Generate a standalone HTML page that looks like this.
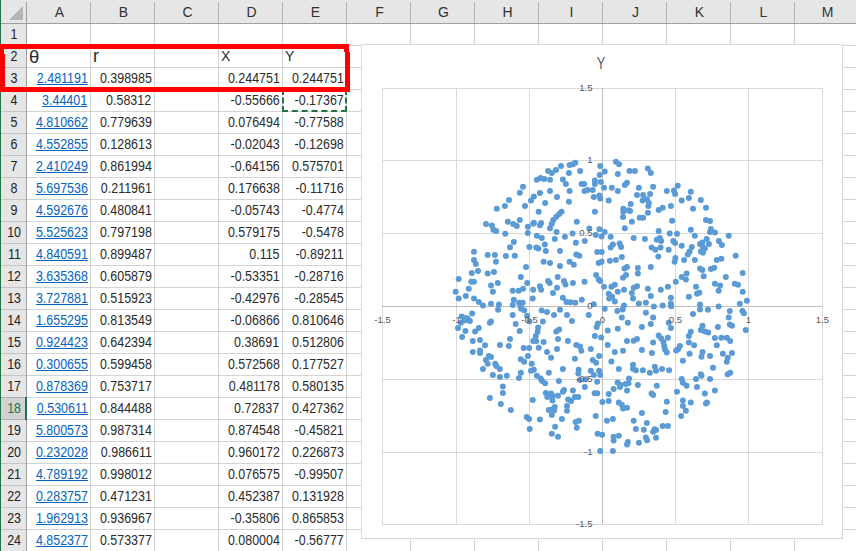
<!DOCTYPE html><html><head><meta charset="utf-8"><style>

*{margin:0;padding:0;box-sizing:border-box}
html,body{width:856px;height:551px;overflow:hidden;background:#fff}
body{position:relative;font-family:"Liberation Sans",sans-serif}
.a{position:absolute}
.hl{position:absolute;height:1px;background:#d4d4d4}
.vl{position:absolute;width:1px;background:#d4d4d4}
.ch{position:absolute;top:0;height:23px;text-align:center;font-size:14px;line-height:24px;color:#333}
.rh{position:absolute;left:2px;width:25px;text-align:center;font-size:14.5px;color:#222}
.c{position:absolute;height:21px;line-height:21px;font-size:14px;color:#2a2a2a;white-space:nowrap}
.c span{display:inline-block;transform:translateX(-0.5px) scaleX(0.89);transform-origin:100% 50%}
.rh span{display:inline-block;transform:scaleX(0.86);transform-origin:50% 50%}
.r{text-align:right}
.lk{color:#0563c1}
.lk span{text-decoration:underline}

</style></head><body>
<div class="a" style="left:0;top:0;width:856px;height:23px;background:#e6e6e6"></div>
<div class="a" style="left:0;top:23px;width:856px;height:1px;background:#9f9f9f"></div>
<div class="a" style="left:0;top:24px;width:26px;height:527px;background:#e6e6e6"></div>
<div class="a" style="left:26px;top:2px;width:1px;height:549px;background:#9f9f9f"></div>
<svg class="a" style="left:0;top:0" width="26" height="23"><polygon points="9,20 23,6 23,20" fill="#b4b4b4"/></svg>
<div class="ch" style="left:28px;width:63px">A</div>
<div class="ch" style="left:92px;width:63px">B</div>
<div class="ch" style="left:156px;width:63px">C</div>
<div class="ch" style="left:220px;width:63px">D</div>
<div class="ch" style="left:284px;width:63px">E</div>
<div class="ch" style="left:348px;width:63px">F</div>
<div class="ch" style="left:412px;width:63px">G</div>
<div class="ch" style="left:476px;width:63px">H</div>
<div class="ch" style="left:540px;width:63px">I</div>
<div class="ch" style="left:604px;width:63px">J</div>
<div class="ch" style="left:668px;width:63px">K</div>
<div class="ch" style="left:732px;width:63px">L</div>
<div class="ch" style="left:796px;width:63px">M</div>
<div class="a" style="left:90px;top:2px;width:1px;height:21px;background:#b5b5b5"></div>
<div class="a" style="left:154px;top:2px;width:1px;height:21px;background:#b5b5b5"></div>
<div class="a" style="left:218px;top:2px;width:1px;height:21px;background:#b5b5b5"></div>
<div class="a" style="left:282px;top:2px;width:1px;height:21px;background:#b5b5b5"></div>
<div class="a" style="left:346px;top:2px;width:1px;height:21px;background:#b5b5b5"></div>
<div class="a" style="left:410px;top:2px;width:1px;height:21px;background:#b5b5b5"></div>
<div class="a" style="left:474px;top:2px;width:1px;height:21px;background:#b5b5b5"></div>
<div class="a" style="left:538px;top:2px;width:1px;height:21px;background:#b5b5b5"></div>
<div class="a" style="left:602px;top:2px;width:1px;height:21px;background:#b5b5b5"></div>
<div class="a" style="left:666px;top:2px;width:1px;height:21px;background:#b5b5b5"></div>
<div class="a" style="left:730px;top:2px;width:1px;height:21px;background:#b5b5b5"></div>
<div class="a" style="left:794px;top:2px;width:1px;height:21px;background:#b5b5b5"></div>
<div class="a" style="left:858px;top:2px;width:1px;height:21px;background:#b5b5b5"></div>
<div class="vl" style="left:90px;top:24px;height:527px"></div>
<div class="vl" style="left:154px;top:24px;height:527px"></div>
<div class="vl" style="left:218px;top:24px;height:527px"></div>
<div class="vl" style="left:282px;top:24px;height:527px"></div>
<div class="vl" style="left:346px;top:24px;height:527px"></div>
<div class="vl" style="left:410px;top:24px;height:527px"></div>
<div class="vl" style="left:474px;top:24px;height:527px"></div>
<div class="vl" style="left:538px;top:24px;height:527px"></div>
<div class="vl" style="left:602px;top:24px;height:527px"></div>
<div class="vl" style="left:666px;top:24px;height:527px"></div>
<div class="vl" style="left:730px;top:24px;height:527px"></div>
<div class="vl" style="left:794px;top:24px;height:527px"></div>
<div class="vl" style="left:858px;top:24px;height:527px"></div>
<div class="hl" style="left:27px;top:45px;width:829px"></div>
<div class="a" style="left:1px;top:45px;width:25px;height:1px;background:#c4c4c4"></div>
<div class="hl" style="left:27px;top:67px;width:829px"></div>
<div class="a" style="left:1px;top:67px;width:25px;height:1px;background:#c4c4c4"></div>
<div class="hl" style="left:27px;top:89px;width:829px"></div>
<div class="a" style="left:1px;top:89px;width:25px;height:1px;background:#c4c4c4"></div>
<div class="hl" style="left:27px;top:111px;width:829px"></div>
<div class="a" style="left:1px;top:111px;width:25px;height:1px;background:#c4c4c4"></div>
<div class="hl" style="left:27px;top:133px;width:829px"></div>
<div class="a" style="left:1px;top:133px;width:25px;height:1px;background:#c4c4c4"></div>
<div class="hl" style="left:27px;top:155px;width:829px"></div>
<div class="a" style="left:1px;top:155px;width:25px;height:1px;background:#c4c4c4"></div>
<div class="hl" style="left:27px;top:177px;width:829px"></div>
<div class="a" style="left:1px;top:177px;width:25px;height:1px;background:#c4c4c4"></div>
<div class="hl" style="left:27px;top:199px;width:829px"></div>
<div class="a" style="left:1px;top:199px;width:25px;height:1px;background:#c4c4c4"></div>
<div class="hl" style="left:27px;top:221px;width:829px"></div>
<div class="a" style="left:1px;top:221px;width:25px;height:1px;background:#c4c4c4"></div>
<div class="hl" style="left:27px;top:243px;width:829px"></div>
<div class="a" style="left:1px;top:243px;width:25px;height:1px;background:#c4c4c4"></div>
<div class="hl" style="left:27px;top:265px;width:829px"></div>
<div class="a" style="left:1px;top:265px;width:25px;height:1px;background:#c4c4c4"></div>
<div class="hl" style="left:27px;top:287px;width:829px"></div>
<div class="a" style="left:1px;top:287px;width:25px;height:1px;background:#c4c4c4"></div>
<div class="hl" style="left:27px;top:309px;width:829px"></div>
<div class="a" style="left:1px;top:309px;width:25px;height:1px;background:#c4c4c4"></div>
<div class="hl" style="left:27px;top:331px;width:829px"></div>
<div class="a" style="left:1px;top:331px;width:25px;height:1px;background:#c4c4c4"></div>
<div class="hl" style="left:27px;top:353px;width:829px"></div>
<div class="a" style="left:1px;top:353px;width:25px;height:1px;background:#c4c4c4"></div>
<div class="hl" style="left:27px;top:375px;width:829px"></div>
<div class="a" style="left:1px;top:375px;width:25px;height:1px;background:#c4c4c4"></div>
<div class="hl" style="left:27px;top:397px;width:829px"></div>
<div class="a" style="left:1px;top:397px;width:25px;height:1px;background:#c4c4c4"></div>
<div class="hl" style="left:27px;top:419px;width:829px"></div>
<div class="a" style="left:1px;top:419px;width:25px;height:1px;background:#c4c4c4"></div>
<div class="hl" style="left:27px;top:441px;width:829px"></div>
<div class="a" style="left:1px;top:441px;width:25px;height:1px;background:#c4c4c4"></div>
<div class="hl" style="left:27px;top:463px;width:829px"></div>
<div class="a" style="left:1px;top:463px;width:25px;height:1px;background:#c4c4c4"></div>
<div class="hl" style="left:27px;top:485px;width:829px"></div>
<div class="a" style="left:1px;top:485px;width:25px;height:1px;background:#c4c4c4"></div>
<div class="hl" style="left:27px;top:507px;width:829px"></div>
<div class="a" style="left:1px;top:507px;width:25px;height:1px;background:#c4c4c4"></div>
<div class="hl" style="left:27px;top:529px;width:829px"></div>
<div class="a" style="left:1px;top:529px;width:25px;height:1px;background:#c4c4c4"></div>
<div class="hl" style="left:27px;top:551px;width:829px"></div>
<div class="a" style="left:1px;top:551px;width:25px;height:1px;background:#c4c4c4"></div>
<div class="a" style="left:1px;top:397px;width:25px;height:23px;background:#d2d2d2;border-top:1px solid #b0b0b0;border-bottom:1px solid #b0b0b0"></div>
<div class="a" style="left:25px;top:397px;width:2px;height:23px;background:#217346"></div>
<div class="rh" style="top:24px;height:21px;line-height:21px;color:#222"><span>1</span></div>
<div class="rh" style="top:46px;height:21px;line-height:21px;color:#222"><span>2</span></div>
<div class="rh" style="top:68px;height:21px;line-height:21px;color:#222"><span>3</span></div>
<div class="rh" style="top:90px;height:21px;line-height:21px;color:#222"><span>4</span></div>
<div class="rh" style="top:112px;height:21px;line-height:21px;color:#222"><span>5</span></div>
<div class="rh" style="top:134px;height:21px;line-height:21px;color:#222"><span>6</span></div>
<div class="rh" style="top:156px;height:21px;line-height:21px;color:#222"><span>7</span></div>
<div class="rh" style="top:178px;height:21px;line-height:21px;color:#222"><span>8</span></div>
<div class="rh" style="top:200px;height:21px;line-height:21px;color:#222"><span>9</span></div>
<div class="rh" style="top:222px;height:21px;line-height:21px;color:#222"><span>10</span></div>
<div class="rh" style="top:244px;height:21px;line-height:21px;color:#222"><span>11</span></div>
<div class="rh" style="top:266px;height:21px;line-height:21px;color:#222"><span>12</span></div>
<div class="rh" style="top:288px;height:21px;line-height:21px;color:#222"><span>13</span></div>
<div class="rh" style="top:310px;height:21px;line-height:21px;color:#222"><span>14</span></div>
<div class="rh" style="top:332px;height:21px;line-height:21px;color:#222"><span>15</span></div>
<div class="rh" style="top:354px;height:21px;line-height:21px;color:#222"><span>16</span></div>
<div class="rh" style="top:376px;height:21px;line-height:21px;color:#222"><span>17</span></div>
<div class="rh" style="top:398px;height:21px;line-height:21px;color:#217346"><span>18</span></div>
<div class="rh" style="top:420px;height:21px;line-height:21px;color:#222"><span>19</span></div>
<div class="rh" style="top:442px;height:21px;line-height:21px;color:#222"><span>20</span></div>
<div class="rh" style="top:464px;height:21px;line-height:21px;color:#222"><span>21</span></div>
<div class="rh" style="top:486px;height:21px;line-height:21px;color:#222"><span>22</span></div>
<div class="rh" style="top:508px;height:21px;line-height:21px;color:#222"><span>23</span></div>
<div class="rh" style="top:530px;height:21px;line-height:21px;color:#222"><span>24</span></div>
<div class="a" style="left:0;top:0;width:1px;height:551px;background:#217346"></div>
<div class="c" style="left:29px;top:46px;font-size:18.5px">θ</div>
<div class="c" style="left:93px;top:46px;font-size:18px">r</div>
<div class="c" style="left:221px;top:46px;font-size:14px">X</div>
<div class="c" style="left:285px;top:46px;font-size:14px">Y</div>
<div class="c r lk" style="left:27px;width:61px;top:68px"><span>2.481191</span></div>
<div class="c r" style="left:91px;width:61px;top:68px"><span>0.398985</span></div>
<div class="c r" style="left:219px;width:61px;top:68px"><span>0.244751</span></div>
<div class="c r" style="left:283px;width:61px;top:68px"><span>0.244751</span></div>
<div class="c r lk" style="left:27px;width:61px;top:90px"><span>3.44401</span></div>
<div class="c r" style="left:91px;width:61px;top:90px"><span>0.58312</span></div>
<div class="c r" style="left:219px;width:61px;top:90px"><span>-0.55666</span></div>
<div class="c r" style="left:283px;width:61px;top:90px"><span>-0.17367</span></div>
<div class="c r lk" style="left:27px;width:61px;top:112px"><span>4.810662</span></div>
<div class="c r" style="left:91px;width:61px;top:112px"><span>0.779639</span></div>
<div class="c r" style="left:219px;width:61px;top:112px"><span>0.076494</span></div>
<div class="c r" style="left:283px;width:61px;top:112px"><span>-0.77588</span></div>
<div class="c r lk" style="left:27px;width:61px;top:134px"><span>4.552855</span></div>
<div class="c r" style="left:91px;width:61px;top:134px"><span>0.128613</span></div>
<div class="c r" style="left:219px;width:61px;top:134px"><span>-0.02043</span></div>
<div class="c r" style="left:283px;width:61px;top:134px"><span>-0.12698</span></div>
<div class="c r lk" style="left:27px;width:61px;top:156px"><span>2.410249</span></div>
<div class="c r" style="left:91px;width:61px;top:156px"><span>0.861994</span></div>
<div class="c r" style="left:219px;width:61px;top:156px"><span>-0.64156</span></div>
<div class="c r" style="left:283px;width:61px;top:156px"><span>0.575701</span></div>
<div class="c r lk" style="left:27px;width:61px;top:178px"><span>5.697536</span></div>
<div class="c r" style="left:91px;width:61px;top:178px"><span>0.211961</span></div>
<div class="c r" style="left:219px;width:61px;top:178px"><span>0.176638</span></div>
<div class="c r" style="left:283px;width:61px;top:178px"><span>-0.11716</span></div>
<div class="c r lk" style="left:27px;width:61px;top:200px"><span>4.592676</span></div>
<div class="c r" style="left:91px;width:61px;top:200px"><span>0.480841</span></div>
<div class="c r" style="left:219px;width:61px;top:200px"><span>-0.05743</span></div>
<div class="c r" style="left:283px;width:61px;top:200px"><span>-0.4774</span></div>
<div class="c r lk" style="left:27px;width:61px;top:222px"><span>5.525623</span></div>
<div class="c r" style="left:91px;width:61px;top:222px"><span>0.797198</span></div>
<div class="c r" style="left:219px;width:61px;top:222px"><span>0.579175</span></div>
<div class="c r" style="left:283px;width:61px;top:222px"><span>-0.5478</span></div>
<div class="c r lk" style="left:27px;width:61px;top:244px"><span>4.840591</span></div>
<div class="c r" style="left:91px;width:61px;top:244px"><span>0.899487</span></div>
<div class="c r" style="left:219px;width:61px;top:244px"><span>0.115</span></div>
<div class="c r" style="left:283px;width:61px;top:244px"><span>-0.89211</span></div>
<div class="c r lk" style="left:27px;width:61px;top:266px"><span>3.635368</span></div>
<div class="c r" style="left:91px;width:61px;top:266px"><span>0.605879</span></div>
<div class="c r" style="left:219px;width:61px;top:266px"><span>-0.53351</span></div>
<div class="c r" style="left:283px;width:61px;top:266px"><span>-0.28716</span></div>
<div class="c r lk" style="left:27px;width:61px;top:288px"><span>3.727881</span></div>
<div class="c r" style="left:91px;width:61px;top:288px"><span>0.515923</span></div>
<div class="c r" style="left:219px;width:61px;top:288px"><span>-0.42976</span></div>
<div class="c r" style="left:283px;width:61px;top:288px"><span>-0.28545</span></div>
<div class="c r lk" style="left:27px;width:61px;top:310px"><span>1.655295</span></div>
<div class="c r" style="left:91px;width:61px;top:310px"><span>0.813549</span></div>
<div class="c r" style="left:219px;width:61px;top:310px"><span>-0.06866</span></div>
<div class="c r" style="left:283px;width:61px;top:310px"><span>0.810646</span></div>
<div class="c r lk" style="left:27px;width:61px;top:332px"><span>0.924423</span></div>
<div class="c r" style="left:91px;width:61px;top:332px"><span>0.642394</span></div>
<div class="c r" style="left:219px;width:61px;top:332px"><span>0.38691</span></div>
<div class="c r" style="left:283px;width:61px;top:332px"><span>0.512806</span></div>
<div class="c r lk" style="left:27px;width:61px;top:354px"><span>0.300655</span></div>
<div class="c r" style="left:91px;width:61px;top:354px"><span>0.599458</span></div>
<div class="c r" style="left:219px;width:61px;top:354px"><span>0.572568</span></div>
<div class="c r" style="left:283px;width:61px;top:354px"><span>0.177527</span></div>
<div class="c r lk" style="left:27px;width:61px;top:376px"><span>0.878369</span></div>
<div class="c r" style="left:91px;width:61px;top:376px"><span>0.753717</span></div>
<div class="c r" style="left:219px;width:61px;top:376px"><span>0.481178</span></div>
<div class="c r" style="left:283px;width:61px;top:376px"><span>0.580135</span></div>
<div class="c r lk" style="left:27px;width:61px;top:398px"><span>0.530611</span></div>
<div class="c r" style="left:91px;width:61px;top:398px"><span>0.844488</span></div>
<div class="c r" style="left:219px;width:61px;top:398px"><span>0.72837</span></div>
<div class="c r" style="left:283px;width:61px;top:398px"><span>0.427362</span></div>
<div class="c r lk" style="left:27px;width:61px;top:420px"><span>5.800573</span></div>
<div class="c r" style="left:91px;width:61px;top:420px"><span>0.987314</span></div>
<div class="c r" style="left:219px;width:61px;top:420px"><span>0.874548</span></div>
<div class="c r" style="left:283px;width:61px;top:420px"><span>-0.45821</span></div>
<div class="c r lk" style="left:27px;width:61px;top:442px"><span>0.232028</span></div>
<div class="c r" style="left:91px;width:61px;top:442px"><span>0.986611</span></div>
<div class="c r" style="left:219px;width:61px;top:442px"><span>0.960172</span></div>
<div class="c r" style="left:283px;width:61px;top:442px"><span>0.226873</span></div>
<div class="c r lk" style="left:27px;width:61px;top:464px"><span>4.789192</span></div>
<div class="c r" style="left:91px;width:61px;top:464px"><span>0.998012</span></div>
<div class="c r" style="left:219px;width:61px;top:464px"><span>0.076575</span></div>
<div class="c r" style="left:283px;width:61px;top:464px"><span>-0.99507</span></div>
<div class="c r lk" style="left:27px;width:61px;top:486px"><span>0.283757</span></div>
<div class="c r" style="left:91px;width:61px;top:486px"><span>0.471231</span></div>
<div class="c r" style="left:219px;width:61px;top:486px"><span>0.452387</span></div>
<div class="c r" style="left:283px;width:61px;top:486px"><span>0.131928</span></div>
<div class="c r lk" style="left:27px;width:61px;top:508px"><span>1.962913</span></div>
<div class="c r" style="left:91px;width:61px;top:508px"><span>0.936967</span></div>
<div class="c r" style="left:219px;width:61px;top:508px"><span>-0.35806</span></div>
<div class="c r" style="left:283px;width:61px;top:508px"><span>0.865853</span></div>
<div class="c r lk" style="left:27px;width:61px;top:530px"><span>4.852377</span></div>
<div class="c r" style="left:91px;width:61px;top:530px"><span>0.573377</span></div>
<div class="c r" style="left:219px;width:61px;top:530px"><span>0.080004</span></div>
<div class="c r" style="left:283px;width:61px;top:530px"><span>-0.56777</span></div>
<div class="a" style="left:282px;top:89px;width:65px;height:23px;border:2px dashed #217346"></div>
<div class="a" style="left:0px;top:44px;width:349px;height:5px;background:#ff0000"></div>
<div class="a" style="left:0px;top:44px;width:4px;height:48px;background:#ff0000"></div>
<div class="a" style="left:4px;top:54px;width:1px;height:38px;background:#ff0000"></div>
<div class="a" style="left:344px;top:44px;width:5px;height:8px;background:#ff0000"></div>
<div class="a" style="left:345px;top:52px;width:5px;height:40px;background:#ff0000"></div>
<div class="a" style="left:0px;top:87px;width:350px;height:5px;background:#ff0000"></div>
<div class="a" style="left:361px;top:44px;width:482px;height:495px;background:#fff;border:1px solid #d9d9d9"></div>
<svg class="a" style="left:0;top:0" width="856" height="551"><line x1="382.5" y1="88" x2="382.5" y2="525" stroke="#d9d9d9" stroke-width="1"/><line x1="382" y1="88.5" x2="823" y2="88.5" stroke="#d9d9d9" stroke-width="1"/><line x1="456.5" y1="88" x2="456.5" y2="525" stroke="#d9d9d9" stroke-width="1"/><line x1="382" y1="160.5" x2="823" y2="160.5" stroke="#d9d9d9" stroke-width="1"/><line x1="529.5" y1="88" x2="529.5" y2="525" stroke="#d9d9d9" stroke-width="1"/><line x1="382" y1="233.5" x2="823" y2="233.5" stroke="#d9d9d9" stroke-width="1"/><line x1="602.5" y1="88" x2="602.5" y2="525" stroke="#bfbfbf" stroke-width="1"/><line x1="382" y1="306.5" x2="823" y2="306.5" stroke="#bfbfbf" stroke-width="1"/><line x1="675.5" y1="88" x2="675.5" y2="525" stroke="#d9d9d9" stroke-width="1"/><line x1="382" y1="379.5" x2="823" y2="379.5" stroke="#d9d9d9" stroke-width="1"/><line x1="748.5" y1="88" x2="748.5" y2="525" stroke="#d9d9d9" stroke-width="1"/><line x1="382" y1="452.5" x2="823" y2="452.5" stroke="#d9d9d9" stroke-width="1"/><line x1="822.5" y1="88" x2="822.5" y2="525" stroke="#d9d9d9" stroke-width="1"/><line x1="382" y1="524.5" x2="823" y2="524.5" stroke="#d9d9d9" stroke-width="1"/><circle cx="523.0" cy="186.8" r="3" fill="#5b9bd5"/><circle cx="519.8" cy="192.8" r="3" fill="#5b9bd5"/><circle cx="509.0" cy="199.9" r="3" fill="#5b9bd5"/><circle cx="504.9" cy="205.9" r="3" fill="#5b9bd5"/><circle cx="496.8" cy="208.8" r="3" fill="#5b9bd5"/><circle cx="525.0" cy="205.9" r="3" fill="#5b9bd5"/><circle cx="486.0" cy="224.0" r="3" fill="#5b9bd5"/><circle cx="491.9" cy="225.6" r="3" fill="#5b9bd5"/><circle cx="493.4" cy="229.7" r="3" fill="#5b9bd5"/><circle cx="496.1" cy="230.9" r="3" fill="#5b9bd5"/><circle cx="507.8" cy="221.8" r="3" fill="#5b9bd5"/><circle cx="513.2" cy="224.0" r="3" fill="#5b9bd5"/><circle cx="516.8" cy="225.9" r="3" fill="#5b9bd5"/><circle cx="519.8" cy="220.0" r="3" fill="#5b9bd5"/><circle cx="505.3" cy="233.7" r="3" fill="#5b9bd5"/><circle cx="527.9" cy="226.8" r="3" fill="#5b9bd5"/><circle cx="527.8" cy="233.1" r="3" fill="#5b9bd5"/><circle cx="531.0" cy="200.6" r="3" fill="#5b9bd5"/><circle cx="533.9" cy="196.5" r="3" fill="#5b9bd5"/><circle cx="533.2" cy="223.7" r="3" fill="#5b9bd5"/><circle cx="536.9" cy="179.8" r="3" fill="#5b9bd5"/><circle cx="540.6" cy="178.0" r="3" fill="#5b9bd5"/><circle cx="544.3" cy="179.1" r="3" fill="#5b9bd5"/><circle cx="550.0" cy="179.8" r="3" fill="#5b9bd5"/><circle cx="548.1" cy="170.9" r="3" fill="#5b9bd5"/><circle cx="551.8" cy="173.1" r="3" fill="#5b9bd5"/><circle cx="556.0" cy="170.1" r="3" fill="#5b9bd5"/><circle cx="561.0" cy="166.1" r="3" fill="#5b9bd5"/><circle cx="569.6" cy="164.9" r="3" fill="#5b9bd5"/><circle cx="572.9" cy="164.2" r="3" fill="#5b9bd5"/><circle cx="575.3" cy="162.7" r="3" fill="#5b9bd5"/><circle cx="568.9" cy="173.1" r="3" fill="#5b9bd5"/><circle cx="580.1" cy="170.9" r="3" fill="#5b9bd5"/><circle cx="600.2" cy="166.1" r="3" fill="#5b9bd5"/><circle cx="599.7" cy="175.0" r="3" fill="#5b9bd5"/><circle cx="600.9" cy="182.0" r="3" fill="#5b9bd5"/><circle cx="562.9" cy="179.5" r="3" fill="#5b9bd5"/><circle cx="565.9" cy="184.0" r="3" fill="#5b9bd5"/><circle cx="539.9" cy="192.9" r="3" fill="#5b9bd5"/><circle cx="550.0" cy="191.0" r="3" fill="#5b9bd5"/><circle cx="557.0" cy="196.9" r="3" fill="#5b9bd5"/><circle cx="569.6" cy="191.0" r="3" fill="#5b9bd5"/><circle cx="581.6" cy="184.0" r="3" fill="#5b9bd5"/><circle cx="584.2" cy="184.0" r="3" fill="#5b9bd5"/><circle cx="584.5" cy="191.0" r="3" fill="#5b9bd5"/><circle cx="587.5" cy="189.9" r="3" fill="#5b9bd5"/><circle cx="592.7" cy="189.9" r="3" fill="#5b9bd5"/><circle cx="594.9" cy="180.6" r="3" fill="#5b9bd5"/><circle cx="594.9" cy="184.0" r="3" fill="#5b9bd5"/><circle cx="593.8" cy="196.9" r="3" fill="#5b9bd5"/><circle cx="599.4" cy="195.4" r="3" fill="#5b9bd5"/><circle cx="600.2" cy="198.4" r="3" fill="#5b9bd5"/><circle cx="545.1" cy="202.9" r="3" fill="#5b9bd5"/><circle cx="568.9" cy="201.8" r="3" fill="#5b9bd5"/><circle cx="538.7" cy="211.8" r="3" fill="#5b9bd5"/><circle cx="594.9" cy="211.8" r="3" fill="#5b9bd5"/><circle cx="561.5" cy="211.8" r="3" fill="#5b9bd5"/><circle cx="559.2" cy="214.0" r="3" fill="#5b9bd5"/><circle cx="556.3" cy="216.7" r="3" fill="#5b9bd5"/><circle cx="553.3" cy="220.0" r="3" fill="#5b9bd5"/><circle cx="551.8" cy="223.7" r="3" fill="#5b9bd5"/><circle cx="550.0" cy="228.2" r="3" fill="#5b9bd5"/><circle cx="541.1" cy="223.0" r="3" fill="#5b9bd5"/><circle cx="539.9" cy="225.2" r="3" fill="#5b9bd5"/><circle cx="533.9" cy="222.7" r="3" fill="#5b9bd5"/><circle cx="576.8" cy="221.8" r="3" fill="#5b9bd5"/><circle cx="556.5" cy="231.9" r="3" fill="#5b9bd5"/><circle cx="572.6" cy="233.4" r="3" fill="#5b9bd5"/><circle cx="589.3" cy="228.6" r="3" fill="#5b9bd5"/><circle cx="599.4" cy="229.2" r="3" fill="#5b9bd5"/><circle cx="615.9" cy="161.7" r="3" fill="#5b9bd5"/><circle cx="619.1" cy="164.2" r="3" fill="#5b9bd5"/><circle cx="604.7" cy="171.6" r="3" fill="#5b9bd5"/><circle cx="617.8" cy="173.9" r="3" fill="#5b9bd5"/><circle cx="629.5" cy="170.9" r="3" fill="#5b9bd5"/><circle cx="634.9" cy="170.9" r="3" fill="#5b9bd5"/><circle cx="647.9" cy="168.6" r="3" fill="#5b9bd5"/><circle cx="650.8" cy="173.1" r="3" fill="#5b9bd5"/><circle cx="604.0" cy="187.7" r="3" fill="#5b9bd5"/><circle cx="611.8" cy="187.7" r="3" fill="#5b9bd5"/><circle cx="617.8" cy="191.0" r="3" fill="#5b9bd5"/><circle cx="624.8" cy="185.0" r="3" fill="#5b9bd5"/><circle cx="627.0" cy="182.8" r="3" fill="#5b9bd5"/><circle cx="638.9" cy="187.7" r="3" fill="#5b9bd5"/><circle cx="653.1" cy="186.8" r="3" fill="#5b9bd5"/><circle cx="637.0" cy="195.0" r="3" fill="#5b9bd5"/><circle cx="643.1" cy="195.0" r="3" fill="#5b9bd5"/><circle cx="650.1" cy="193.9" r="3" fill="#5b9bd5"/><circle cx="642.6" cy="200.6" r="3" fill="#5b9bd5"/><circle cx="646.8" cy="199.2" r="3" fill="#5b9bd5"/><circle cx="648.9" cy="202.9" r="3" fill="#5b9bd5"/><circle cx="648.3" cy="205.9" r="3" fill="#5b9bd5"/><circle cx="608.7" cy="200.6" r="3" fill="#5b9bd5"/><circle cx="630.7" cy="203.9" r="3" fill="#5b9bd5"/><circle cx="623.3" cy="208.8" r="3" fill="#5b9bd5"/><circle cx="623.3" cy="211.8" r="3" fill="#5b9bd5"/><circle cx="628.5" cy="210.3" r="3" fill="#5b9bd5"/><circle cx="630.0" cy="211.1" r="3" fill="#5b9bd5"/><circle cx="623.0" cy="217.0" r="3" fill="#5b9bd5"/><circle cx="631.9" cy="221.8" r="3" fill="#5b9bd5"/><circle cx="639.7" cy="217.8" r="3" fill="#5b9bd5"/><circle cx="643.1" cy="217.8" r="3" fill="#5b9bd5"/><circle cx="647.9" cy="212.8" r="3" fill="#5b9bd5"/><circle cx="658.7" cy="209.9" r="3" fill="#5b9bd5"/><circle cx="662.7" cy="207.8" r="3" fill="#5b9bd5"/><circle cx="670.9" cy="205.9" r="3" fill="#5b9bd5"/><circle cx="666.8" cy="191.0" r="3" fill="#5b9bd5"/><circle cx="673.9" cy="190.5" r="3" fill="#5b9bd5"/><circle cx="675.1" cy="193.9" r="3" fill="#5b9bd5"/><circle cx="672.1" cy="220.7" r="3" fill="#5b9bd5"/><circle cx="624.8" cy="228.2" r="3" fill="#5b9bd5"/><circle cx="658.7" cy="230.9" r="3" fill="#5b9bd5"/><circle cx="604.7" cy="231.9" r="3" fill="#5b9bd5"/><circle cx="677.7" cy="185.8" r="3" fill="#5b9bd5"/><circle cx="690.8" cy="191.7" r="3" fill="#5b9bd5"/><circle cx="688.9" cy="198.0" r="3" fill="#5b9bd5"/><circle cx="681.7" cy="200.6" r="3" fill="#5b9bd5"/><circle cx="700.8" cy="199.9" r="3" fill="#5b9bd5"/><circle cx="693.0" cy="208.8" r="3" fill="#5b9bd5"/><circle cx="706.0" cy="207.8" r="3" fill="#5b9bd5"/><circle cx="706.0" cy="220.0" r="3" fill="#5b9bd5"/><circle cx="710.0" cy="221.0" r="3" fill="#5b9bd5"/><circle cx="690.8" cy="229.7" r="3" fill="#5b9bd5"/><circle cx="710.9" cy="228.9" r="3" fill="#5b9bd5"/><circle cx="710.0" cy="231.9" r="3" fill="#5b9bd5"/><circle cx="714.9" cy="232.6" r="3" fill="#5b9bd5"/><circle cx="513.8" cy="241.9" r="3" fill="#5b9bd5"/><circle cx="510.0" cy="247.2" r="3" fill="#5b9bd5"/><circle cx="529.4" cy="246.9" r="3" fill="#5b9bd5"/><circle cx="474.0" cy="251.8" r="3" fill="#5b9bd5"/><circle cx="487.7" cy="255.0" r="3" fill="#5b9bd5"/><circle cx="494.9" cy="255.0" r="3" fill="#5b9bd5"/><circle cx="505.9" cy="256.1" r="3" fill="#5b9bd5"/><circle cx="514.8" cy="255.8" r="3" fill="#5b9bd5"/><circle cx="474.0" cy="260.0" r="3" fill="#5b9bd5"/><circle cx="475.8" cy="264.0" r="3" fill="#5b9bd5"/><circle cx="495.9" cy="261.7" r="3" fill="#5b9bd5"/><circle cx="471.8" cy="272.9" r="3" fill="#5b9bd5"/><circle cx="478.0" cy="271.0" r="3" fill="#5b9bd5"/><circle cx="487.7" cy="273.6" r="3" fill="#5b9bd5"/><circle cx="494.0" cy="271.9" r="3" fill="#5b9bd5"/><circle cx="526.0" cy="266.9" r="3" fill="#5b9bd5"/><circle cx="458.7" cy="278.9" r="3" fill="#5b9bd5"/><circle cx="471.3" cy="281.8" r="3" fill="#5b9bd5"/><circle cx="474.0" cy="281.8" r="3" fill="#5b9bd5"/><circle cx="497.8" cy="282.9" r="3" fill="#5b9bd5"/><circle cx="491.0" cy="285.6" r="3" fill="#5b9bd5"/><circle cx="492.9" cy="291.8" r="3" fill="#5b9bd5"/><circle cx="520.8" cy="276.9" r="3" fill="#5b9bd5"/><circle cx="527.2" cy="282.9" r="3" fill="#5b9bd5"/><circle cx="455.7" cy="291.8" r="3" fill="#5b9bd5"/><circle cx="468.8" cy="288.8" r="3" fill="#5b9bd5"/><circle cx="465.8" cy="296.0" r="3" fill="#5b9bd5"/><circle cx="458.7" cy="298.6" r="3" fill="#5b9bd5"/><circle cx="474.0" cy="298.6" r="3" fill="#5b9bd5"/><circle cx="478.8" cy="301.9" r="3" fill="#5b9bd5"/><circle cx="483.0" cy="305.6" r="3" fill="#5b9bd5"/><circle cx="491.0" cy="303.7" r="3" fill="#5b9bd5"/><circle cx="498.9" cy="304.6" r="3" fill="#5b9bd5"/><circle cx="512.7" cy="290.8" r="3" fill="#5b9bd5"/><circle cx="518.7" cy="290.8" r="3" fill="#5b9bd5"/><circle cx="523.1" cy="288.8" r="3" fill="#5b9bd5"/><circle cx="513.8" cy="299.7" r="3" fill="#5b9bd5"/><circle cx="512.7" cy="304.9" r="3" fill="#5b9bd5"/><circle cx="519.0" cy="302.7" r="3" fill="#5b9bd5"/><circle cx="522.7" cy="302.7" r="3" fill="#5b9bd5"/><circle cx="520.5" cy="306.4" r="3" fill="#5b9bd5"/><circle cx="536.9" cy="235.7" r="3" fill="#5b9bd5"/><circle cx="541.8" cy="237.9" r="3" fill="#5b9bd5"/><circle cx="554.8" cy="239.1" r="3" fill="#5b9bd5"/><circle cx="564.9" cy="236.7" r="3" fill="#5b9bd5"/><circle cx="575.9" cy="242.8" r="3" fill="#5b9bd5"/><circle cx="584.8" cy="240.9" r="3" fill="#5b9bd5"/><circle cx="595.7" cy="235.0" r="3" fill="#5b9bd5"/><circle cx="601.6" cy="236.4" r="3" fill="#5b9bd5"/><circle cx="536.2" cy="247.6" r="3" fill="#5b9bd5"/><circle cx="538.4" cy="248.6" r="3" fill="#5b9bd5"/><circle cx="544.8" cy="244.6" r="3" fill="#5b9bd5"/><circle cx="545.8" cy="250.9" r="3" fill="#5b9bd5"/><circle cx="560.0" cy="251.0" r="3" fill="#5b9bd5"/><circle cx="576.3" cy="254.6" r="3" fill="#5b9bd5"/><circle cx="579.3" cy="255.8" r="3" fill="#5b9bd5"/><circle cx="597.2" cy="252.1" r="3" fill="#5b9bd5"/><circle cx="601.6" cy="252.1" r="3" fill="#5b9bd5"/><circle cx="543.6" cy="261.7" r="3" fill="#5b9bd5"/><circle cx="550.0" cy="262.9" r="3" fill="#5b9bd5"/><circle cx="560.0" cy="265.9" r="3" fill="#5b9bd5"/><circle cx="569.6" cy="261.7" r="3" fill="#5b9bd5"/><circle cx="573.8" cy="264.7" r="3" fill="#5b9bd5"/><circle cx="598.7" cy="262.9" r="3" fill="#5b9bd5"/><circle cx="601.6" cy="261.7" r="3" fill="#5b9bd5"/><circle cx="557.7" cy="276.9" r="3" fill="#5b9bd5"/><circle cx="548.1" cy="281.1" r="3" fill="#5b9bd5"/><circle cx="549.6" cy="282.9" r="3" fill="#5b9bd5"/><circle cx="564.0" cy="281.1" r="3" fill="#5b9bd5"/><circle cx="565.5" cy="284.4" r="3" fill="#5b9bd5"/><circle cx="572.9" cy="282.9" r="3" fill="#5b9bd5"/><circle cx="584.5" cy="281.8" r="3" fill="#5b9bd5"/><circle cx="596.1" cy="275.1" r="3" fill="#5b9bd5"/><circle cx="598.7" cy="279.6" r="3" fill="#5b9bd5"/><circle cx="600.2" cy="281.1" r="3" fill="#5b9bd5"/><circle cx="533.2" cy="289.7" r="3" fill="#5b9bd5"/><circle cx="539.9" cy="286.3" r="3" fill="#5b9bd5"/><circle cx="541.1" cy="289.7" r="3" fill="#5b9bd5"/><circle cx="557.0" cy="287.8" r="3" fill="#5b9bd5"/><circle cx="553.0" cy="293.0" r="3" fill="#5b9bd5"/><circle cx="532.7" cy="298.6" r="3" fill="#5b9bd5"/><circle cx="562.9" cy="297.8" r="3" fill="#5b9bd5"/><circle cx="566.4" cy="301.9" r="3" fill="#5b9bd5"/><circle cx="570.4" cy="302.2" r="3" fill="#5b9bd5"/><circle cx="575.3" cy="302.7" r="3" fill="#5b9bd5"/><circle cx="581.8" cy="299.7" r="3" fill="#5b9bd5"/><circle cx="593.8" cy="304.2" r="3" fill="#5b9bd5"/><circle cx="669.7" cy="233.5" r="3" fill="#5b9bd5"/><circle cx="610.6" cy="236.7" r="3" fill="#5b9bd5"/><circle cx="633.7" cy="237.9" r="3" fill="#5b9bd5"/><circle cx="644.9" cy="239.0" r="3" fill="#5b9bd5"/><circle cx="656.8" cy="239.7" r="3" fill="#5b9bd5"/><circle cx="659.8" cy="237.9" r="3" fill="#5b9bd5"/><circle cx="661.2" cy="240.9" r="3" fill="#5b9bd5"/><circle cx="673.2" cy="240.9" r="3" fill="#5b9bd5"/><circle cx="675.1" cy="243.1" r="3" fill="#5b9bd5"/><circle cx="610.6" cy="247.6" r="3" fill="#5b9bd5"/><circle cx="612.9" cy="244.6" r="3" fill="#5b9bd5"/><circle cx="619.6" cy="243.6" r="3" fill="#5b9bd5"/><circle cx="621.1" cy="246.9" r="3" fill="#5b9bd5"/><circle cx="651.6" cy="247.6" r="3" fill="#5b9bd5"/><circle cx="655.3" cy="249.8" r="3" fill="#5b9bd5"/><circle cx="660.5" cy="247.6" r="3" fill="#5b9bd5"/><circle cx="668.7" cy="249.8" r="3" fill="#5b9bd5"/><circle cx="609.9" cy="260.7" r="3" fill="#5b9bd5"/><circle cx="615.9" cy="260.0" r="3" fill="#5b9bd5"/><circle cx="621.8" cy="257.0" r="3" fill="#5b9bd5"/><circle cx="658.3" cy="256.5" r="3" fill="#5b9bd5"/><circle cx="675.4" cy="258.0" r="3" fill="#5b9bd5"/><circle cx="674.6" cy="261.7" r="3" fill="#5b9bd5"/><circle cx="624.5" cy="268.4" r="3" fill="#5b9bd5"/><circle cx="627.0" cy="266.9" r="3" fill="#5b9bd5"/><circle cx="637.9" cy="268.0" r="3" fill="#5b9bd5"/><circle cx="637.9" cy="273.6" r="3" fill="#5b9bd5"/><circle cx="650.8" cy="266.9" r="3" fill="#5b9bd5"/><circle cx="623.0" cy="277.8" r="3" fill="#5b9bd5"/><circle cx="626.0" cy="275.1" r="3" fill="#5b9bd5"/><circle cx="604.0" cy="286.7" r="3" fill="#5b9bd5"/><circle cx="611.4" cy="286.7" r="3" fill="#5b9bd5"/><circle cx="614.8" cy="284.8" r="3" fill="#5b9bd5"/><circle cx="617.8" cy="291.8" r="3" fill="#5b9bd5"/><circle cx="624.0" cy="289.7" r="3" fill="#5b9bd5"/><circle cx="633.7" cy="287.8" r="3" fill="#5b9bd5"/><circle cx="637.0" cy="286.3" r="3" fill="#5b9bd5"/><circle cx="631.9" cy="293.0" r="3" fill="#5b9bd5"/><circle cx="633.0" cy="298.6" r="3" fill="#5b9bd5"/><circle cx="608.7" cy="293.7" r="3" fill="#5b9bd5"/><circle cx="609.2" cy="298.6" r="3" fill="#5b9bd5"/><circle cx="612.1" cy="296.7" r="3" fill="#5b9bd5"/><circle cx="614.8" cy="301.6" r="3" fill="#5b9bd5"/><circle cx="647.9" cy="288.8" r="3" fill="#5b9bd5"/><circle cx="650.8" cy="296.0" r="3" fill="#5b9bd5"/><circle cx="660.8" cy="289.7" r="3" fill="#5b9bd5"/><circle cx="667.9" cy="286.7" r="3" fill="#5b9bd5"/><circle cx="670.9" cy="297.8" r="3" fill="#5b9bd5"/><circle cx="670.9" cy="303.4" r="3" fill="#5b9bd5"/><circle cx="638.9" cy="303.4" r="3" fill="#5b9bd5"/><circle cx="645.9" cy="302.7" r="3" fill="#5b9bd5"/><circle cx="624.0" cy="305.6" r="3" fill="#5b9bd5"/><circle cx="653.8" cy="306.4" r="3" fill="#5b9bd5"/><circle cx="662.7" cy="305.6" r="3" fill="#5b9bd5"/><circle cx="677.0" cy="233.8" r="3" fill="#5b9bd5"/><circle cx="694.8" cy="235.7" r="3" fill="#5b9bd5"/><circle cx="728.7" cy="235.7" r="3" fill="#5b9bd5"/><circle cx="681.7" cy="245.7" r="3" fill="#5b9bd5"/><circle cx="691.8" cy="246.9" r="3" fill="#5b9bd5"/><circle cx="706.7" cy="239.1" r="3" fill="#5b9bd5"/><circle cx="708.9" cy="243.9" r="3" fill="#5b9bd5"/><circle cx="700.0" cy="243.9" r="3" fill="#5b9bd5"/><circle cx="702.3" cy="242.4" r="3" fill="#5b9bd5"/><circle cx="703.0" cy="247.6" r="3" fill="#5b9bd5"/><circle cx="704.9" cy="248.6" r="3" fill="#5b9bd5"/><circle cx="700.8" cy="251.6" r="3" fill="#5b9bd5"/><circle cx="703.0" cy="252.8" r="3" fill="#5b9bd5"/><circle cx="718.9" cy="240.9" r="3" fill="#5b9bd5"/><circle cx="721.9" cy="245.1" r="3" fill="#5b9bd5"/><circle cx="689.6" cy="251.6" r="3" fill="#5b9bd5"/><circle cx="687.8" cy="254.6" r="3" fill="#5b9bd5"/><circle cx="684.1" cy="260.0" r="3" fill="#5b9bd5"/><circle cx="694.8" cy="260.0" r="3" fill="#5b9bd5"/><circle cx="716.8" cy="260.0" r="3" fill="#5b9bd5"/><circle cx="721.3" cy="258.8" r="3" fill="#5b9bd5"/><circle cx="735.7" cy="255.8" r="3" fill="#5b9bd5"/><circle cx="700.0" cy="268.4" r="3" fill="#5b9bd5"/><circle cx="702.3" cy="269.9" r="3" fill="#5b9bd5"/><circle cx="710.9" cy="268.9" r="3" fill="#5b9bd5"/><circle cx="714.2" cy="267.7" r="3" fill="#5b9bd5"/><circle cx="703.7" cy="276.3" r="3" fill="#5b9bd5"/><circle cx="681.7" cy="276.9" r="3" fill="#5b9bd5"/><circle cx="686.6" cy="273.6" r="3" fill="#5b9bd5"/><circle cx="685.9" cy="279.6" r="3" fill="#5b9bd5"/><circle cx="675.8" cy="281.8" r="3" fill="#5b9bd5"/><circle cx="696.0" cy="286.7" r="3" fill="#5b9bd5"/><circle cx="697.0" cy="293.7" r="3" fill="#5b9bd5"/><circle cx="699.3" cy="292.7" r="3" fill="#5b9bd5"/><circle cx="688.9" cy="296.7" r="3" fill="#5b9bd5"/><circle cx="714.9" cy="283.8" r="3" fill="#5b9bd5"/><circle cx="720.1" cy="285.6" r="3" fill="#5b9bd5"/><circle cx="718.6" cy="290.8" r="3" fill="#5b9bd5"/><circle cx="725.8" cy="276.9" r="3" fill="#5b9bd5"/><circle cx="742.7" cy="272.9" r="3" fill="#5b9bd5"/><circle cx="734.7" cy="283.8" r="3" fill="#5b9bd5"/><circle cx="738.0" cy="284.8" r="3" fill="#5b9bd5"/><circle cx="742.7" cy="291.8" r="3" fill="#5b9bd5"/><circle cx="746.9" cy="300.7" r="3" fill="#5b9bd5"/><circle cx="739.8" cy="303.7" r="3" fill="#5b9bd5"/><circle cx="700.0" cy="304.6" r="3" fill="#5b9bd5"/><circle cx="718.6" cy="306.4" r="3" fill="#5b9bd5"/><circle cx="498.1" cy="309.7" r="3" fill="#5b9bd5"/><circle cx="521.2" cy="308.7" r="3" fill="#5b9bd5"/><circle cx="524.2" cy="310.2" r="3" fill="#5b9bd5"/><circle cx="472.1" cy="313.6" r="3" fill="#5b9bd5"/><circle cx="512.7" cy="315.1" r="3" fill="#5b9bd5"/><circle cx="527.2" cy="315.7" r="3" fill="#5b9bd5"/><circle cx="461.7" cy="316.6" r="3" fill="#5b9bd5"/><circle cx="465.4" cy="318.1" r="3" fill="#5b9bd5"/><circle cx="467.6" cy="318.4" r="3" fill="#5b9bd5"/><circle cx="464.6" cy="320.6" r="3" fill="#5b9bd5"/><circle cx="469.9" cy="321.0" r="3" fill="#5b9bd5"/><circle cx="460.9" cy="322.8" r="3" fill="#5b9bd5"/><circle cx="458.0" cy="328.0" r="3" fill="#5b9bd5"/><circle cx="489.9" cy="322.8" r="3" fill="#5b9bd5"/><circle cx="491.0" cy="321.6" r="3" fill="#5b9bd5"/><circle cx="515.7" cy="324.0" r="3" fill="#5b9bd5"/><circle cx="529.4" cy="321.3" r="3" fill="#5b9bd5"/><circle cx="465.4" cy="331.0" r="3" fill="#5b9bd5"/><circle cx="475.1" cy="331.5" r="3" fill="#5b9bd5"/><circle cx="478.8" cy="328.0" r="3" fill="#5b9bd5"/><circle cx="519.7" cy="331.0" r="3" fill="#5b9bd5"/><circle cx="462.1" cy="337.0" r="3" fill="#5b9bd5"/><circle cx="472.8" cy="341.0" r="3" fill="#5b9bd5"/><circle cx="480.0" cy="339.9" r="3" fill="#5b9bd5"/><circle cx="485.0" cy="345.2" r="3" fill="#5b9bd5"/><circle cx="499.9" cy="344.9" r="3" fill="#5b9bd5"/><circle cx="510.0" cy="338.9" r="3" fill="#5b9bd5"/><circle cx="508.8" cy="345.9" r="3" fill="#5b9bd5"/><circle cx="472.8" cy="351.9" r="3" fill="#5b9bd5"/><circle cx="480.0" cy="350.4" r="3" fill="#5b9bd5"/><circle cx="480.0" cy="352.9" r="3" fill="#5b9bd5"/><circle cx="523.7" cy="348.1" r="3" fill="#5b9bd5"/><circle cx="529.1" cy="348.1" r="3" fill="#5b9bd5"/><circle cx="527.9" cy="355.9" r="3" fill="#5b9bd5"/><circle cx="488.9" cy="355.9" r="3" fill="#5b9bd5"/><circle cx="491.0" cy="357.1" r="3" fill="#5b9bd5"/><circle cx="485.9" cy="360.0" r="3" fill="#5b9bd5"/><circle cx="487.7" cy="363.8" r="3" fill="#5b9bd5"/><circle cx="495.2" cy="363.8" r="3" fill="#5b9bd5"/><circle cx="496.3" cy="366.0" r="3" fill="#5b9bd5"/><circle cx="499.9" cy="369.0" r="3" fill="#5b9bd5"/><circle cx="483.0" cy="369.0" r="3" fill="#5b9bd5"/><circle cx="520.8" cy="359.3" r="3" fill="#5b9bd5"/><circle cx="524.2" cy="361.8" r="3" fill="#5b9bd5"/><circle cx="492.9" cy="374.9" r="3" fill="#5b9bd5"/><circle cx="499.9" cy="376.9" r="3" fill="#5b9bd5"/><circle cx="506.8" cy="375.7" r="3" fill="#5b9bd5"/><circle cx="520.8" cy="372.7" r="3" fill="#5b9bd5"/><circle cx="519.0" cy="377.9" r="3" fill="#5b9bd5"/><circle cx="541.7" cy="310.6" r="3" fill="#5b9bd5"/><circle cx="547.0" cy="312.1" r="3" fill="#5b9bd5"/><circle cx="554.0" cy="315.1" r="3" fill="#5b9bd5"/><circle cx="560.0" cy="309.7" r="3" fill="#5b9bd5"/><circle cx="567.0" cy="315.1" r="3" fill="#5b9bd5"/><circle cx="571.9" cy="321.0" r="3" fill="#5b9bd5"/><circle cx="588.7" cy="315.1" r="3" fill="#5b9bd5"/><circle cx="542.9" cy="321.6" r="3" fill="#5b9bd5"/><circle cx="538.1" cy="327.6" r="3" fill="#5b9bd5"/><circle cx="537.6" cy="331.8" r="3" fill="#5b9bd5"/><circle cx="535.7" cy="335.9" r="3" fill="#5b9bd5"/><circle cx="533.2" cy="341.0" r="3" fill="#5b9bd5"/><circle cx="536.2" cy="341.0" r="3" fill="#5b9bd5"/><circle cx="543.6" cy="341.9" r="3" fill="#5b9bd5"/><circle cx="556.3" cy="331.5" r="3" fill="#5b9bd5"/><circle cx="559.2" cy="329.5" r="3" fill="#5b9bd5"/><circle cx="558.0" cy="338.9" r="3" fill="#5b9bd5"/><circle cx="567.9" cy="341.0" r="3" fill="#5b9bd5"/><circle cx="597.9" cy="323.6" r="3" fill="#5b9bd5"/><circle cx="596.7" cy="327.0" r="3" fill="#5b9bd5"/><circle cx="594.9" cy="335.9" r="3" fill="#5b9bd5"/><circle cx="601.2" cy="337.4" r="3" fill="#5b9bd5"/><circle cx="538.7" cy="347.8" r="3" fill="#5b9bd5"/><circle cx="547.0" cy="351.9" r="3" fill="#5b9bd5"/><circle cx="557.0" cy="348.9" r="3" fill="#5b9bd5"/><circle cx="551.0" cy="357.8" r="3" fill="#5b9bd5"/><circle cx="576.3" cy="344.9" r="3" fill="#5b9bd5"/><circle cx="580.1" cy="346.6" r="3" fill="#5b9bd5"/><circle cx="581.3" cy="350.8" r="3" fill="#5b9bd5"/><circle cx="574.9" cy="358.8" r="3" fill="#5b9bd5"/><circle cx="590.8" cy="348.9" r="3" fill="#5b9bd5"/><circle cx="531.7" cy="363.8" r="3" fill="#5b9bd5"/><circle cx="592.7" cy="360.0" r="3" fill="#5b9bd5"/><circle cx="596.1" cy="362.7" r="3" fill="#5b9bd5"/><circle cx="599.1" cy="355.9" r="3" fill="#5b9bd5"/><circle cx="562.9" cy="369.0" r="3" fill="#5b9bd5"/><circle cx="548.8" cy="372.7" r="3" fill="#5b9bd5"/><circle cx="531.0" cy="370.8" r="3" fill="#5b9bd5"/><circle cx="533.9" cy="369.7" r="3" fill="#5b9bd5"/><circle cx="536.9" cy="375.7" r="3" fill="#5b9bd5"/><circle cx="540.6" cy="378.6" r="3" fill="#5b9bd5"/><circle cx="578.6" cy="369.7" r="3" fill="#5b9bd5"/><circle cx="578.3" cy="373.4" r="3" fill="#5b9bd5"/><circle cx="590.8" cy="370.8" r="3" fill="#5b9bd5"/><circle cx="593.8" cy="374.9" r="3" fill="#5b9bd5"/><circle cx="599.1" cy="370.8" r="3" fill="#5b9bd5"/><circle cx="600.2" cy="374.9" r="3" fill="#5b9bd5"/><circle cx="671.2" cy="306.2" r="3" fill="#5b9bd5"/><circle cx="604.7" cy="308.7" r="3" fill="#5b9bd5"/><circle cx="617.3" cy="310.9" r="3" fill="#5b9bd5"/><circle cx="622.6" cy="309.4" r="3" fill="#5b9bd5"/><circle cx="645.9" cy="312.7" r="3" fill="#5b9bd5"/><circle cx="621.8" cy="317.6" r="3" fill="#5b9bd5"/><circle cx="627.8" cy="322.8" r="3" fill="#5b9bd5"/><circle cx="653.1" cy="317.6" r="3" fill="#5b9bd5"/><circle cx="650.8" cy="324.0" r="3" fill="#5b9bd5"/><circle cx="641.9" cy="327.0" r="3" fill="#5b9bd5"/><circle cx="668.7" cy="322.8" r="3" fill="#5b9bd5"/><circle cx="670.9" cy="328.0" r="3" fill="#5b9bd5"/><circle cx="607.7" cy="330.6" r="3" fill="#5b9bd5"/><circle cx="617.8" cy="328.8" r="3" fill="#5b9bd5"/><circle cx="627.0" cy="341.0" r="3" fill="#5b9bd5"/><circle cx="633.7" cy="340.7" r="3" fill="#5b9bd5"/><circle cx="637.0" cy="338.9" r="3" fill="#5b9bd5"/><circle cx="653.1" cy="342.5" r="3" fill="#5b9bd5"/><circle cx="658.7" cy="335.5" r="3" fill="#5b9bd5"/><circle cx="661.2" cy="338.5" r="3" fill="#5b9bd5"/><circle cx="667.9" cy="337.7" r="3" fill="#5b9bd5"/><circle cx="663.5" cy="341.9" r="3" fill="#5b9bd5"/><circle cx="664.2" cy="345.9" r="3" fill="#5b9bd5"/><circle cx="665.0" cy="349.6" r="3" fill="#5b9bd5"/><circle cx="666.8" cy="352.6" r="3" fill="#5b9bd5"/><circle cx="607.7" cy="344.9" r="3" fill="#5b9bd5"/><circle cx="614.8" cy="351.9" r="3" fill="#5b9bd5"/><circle cx="623.0" cy="350.8" r="3" fill="#5b9bd5"/><circle cx="641.9" cy="349.9" r="3" fill="#5b9bd5"/><circle cx="651.9" cy="352.9" r="3" fill="#5b9bd5"/><circle cx="611.4" cy="361.5" r="3" fill="#5b9bd5"/><circle cx="618.8" cy="369.0" r="3" fill="#5b9bd5"/><circle cx="633.0" cy="364.8" r="3" fill="#5b9bd5"/><circle cx="633.0" cy="368.7" r="3" fill="#5b9bd5"/><circle cx="635.9" cy="370.2" r="3" fill="#5b9bd5"/><circle cx="642.9" cy="370.2" r="3" fill="#5b9bd5"/><circle cx="649.8" cy="372.7" r="3" fill="#5b9bd5"/><circle cx="654.8" cy="366.7" r="3" fill="#5b9bd5"/><circle cx="656.0" cy="370.8" r="3" fill="#5b9bd5"/><circle cx="662.0" cy="369.0" r="3" fill="#5b9bd5"/><circle cx="669.1" cy="370.2" r="3" fill="#5b9bd5"/><circle cx="629.0" cy="378.6" r="3" fill="#5b9bd5"/><circle cx="700.0" cy="309.4" r="3" fill="#5b9bd5"/><circle cx="707.9" cy="309.7" r="3" fill="#5b9bd5"/><circle cx="693.0" cy="313.9" r="3" fill="#5b9bd5"/><circle cx="729.8" cy="310.9" r="3" fill="#5b9bd5"/><circle cx="742.4" cy="310.9" r="3" fill="#5b9bd5"/><circle cx="743.9" cy="313.2" r="3" fill="#5b9bd5"/><circle cx="728.7" cy="317.6" r="3" fill="#5b9bd5"/><circle cx="729.8" cy="324.6" r="3" fill="#5b9bd5"/><circle cx="732.0" cy="325.8" r="3" fill="#5b9bd5"/><circle cx="745.7" cy="330.0" r="3" fill="#5b9bd5"/><circle cx="717.9" cy="327.0" r="3" fill="#5b9bd5"/><circle cx="702.5" cy="325.8" r="3" fill="#5b9bd5"/><circle cx="700.8" cy="330.0" r="3" fill="#5b9bd5"/><circle cx="704.9" cy="331.5" r="3" fill="#5b9bd5"/><circle cx="708.2" cy="332.5" r="3" fill="#5b9bd5"/><circle cx="690.8" cy="331.8" r="3" fill="#5b9bd5"/><circle cx="688.9" cy="335.9" r="3" fill="#5b9bd5"/><circle cx="688.9" cy="342.5" r="3" fill="#5b9bd5"/><circle cx="694.1" cy="345.2" r="3" fill="#5b9bd5"/><circle cx="679.9" cy="345.9" r="3" fill="#5b9bd5"/><circle cx="676.2" cy="350.4" r="3" fill="#5b9bd5"/><circle cx="678.1" cy="349.3" r="3" fill="#5b9bd5"/><circle cx="714.9" cy="338.0" r="3" fill="#5b9bd5"/><circle cx="721.3" cy="337.7" r="3" fill="#5b9bd5"/><circle cx="726.8" cy="337.7" r="3" fill="#5b9bd5"/><circle cx="730.2" cy="341.0" r="3" fill="#5b9bd5"/><circle cx="716.8" cy="345.2" r="3" fill="#5b9bd5"/><circle cx="689.6" cy="353.8" r="3" fill="#5b9bd5"/><circle cx="702.5" cy="351.9" r="3" fill="#5b9bd5"/><circle cx="701.5" cy="356.8" r="3" fill="#5b9bd5"/><circle cx="710.0" cy="355.9" r="3" fill="#5b9bd5"/><circle cx="722.8" cy="353.8" r="3" fill="#5b9bd5"/><circle cx="732.0" cy="352.9" r="3" fill="#5b9bd5"/><circle cx="727.8" cy="357.8" r="3" fill="#5b9bd5"/><circle cx="726.8" cy="361.8" r="3" fill="#5b9bd5"/><circle cx="682.9" cy="360.8" r="3" fill="#5b9bd5"/><circle cx="713.0" cy="367.8" r="3" fill="#5b9bd5"/><circle cx="727.6" cy="374.2" r="3" fill="#5b9bd5"/><circle cx="730.2" cy="372.7" r="3" fill="#5b9bd5"/><circle cx="700.8" cy="374.2" r="3" fill="#5b9bd5"/><circle cx="701.5" cy="375.7" r="3" fill="#5b9bd5"/><circle cx="696.0" cy="379.1" r="3" fill="#5b9bd5"/><circle cx="710.0" cy="379.1" r="3" fill="#5b9bd5"/><circle cx="681.7" cy="379.1" r="3" fill="#5b9bd5"/><circle cx="502.9" cy="386.6" r="3" fill="#5b9bd5"/><circle cx="502.9" cy="392.9" r="3" fill="#5b9bd5"/><circle cx="489.9" cy="398.1" r="3" fill="#5b9bd5"/><circle cx="500.8" cy="404.0" r="3" fill="#5b9bd5"/><circle cx="510.8" cy="410.0" r="3" fill="#5b9bd5"/><circle cx="526.7" cy="417.0" r="3" fill="#5b9bd5"/><circle cx="529.1" cy="418.9" r="3" fill="#5b9bd5"/><circle cx="529.7" cy="428.9" r="3" fill="#5b9bd5"/><circle cx="542.1" cy="381.0" r="3" fill="#5b9bd5"/><circle cx="545.1" cy="383.2" r="3" fill="#5b9bd5"/><circle cx="558.9" cy="381.0" r="3" fill="#5b9bd5"/><circle cx="579.8" cy="379.9" r="3" fill="#5b9bd5"/><circle cx="585.6" cy="379.3" r="3" fill="#5b9bd5"/><circle cx="597.2" cy="381.7" r="3" fill="#5b9bd5"/><circle cx="584.8" cy="386.9" r="3" fill="#5b9bd5"/><circle cx="545.8" cy="392.9" r="3" fill="#5b9bd5"/><circle cx="547.3" cy="397.0" r="3" fill="#5b9bd5"/><circle cx="551.0" cy="393.6" r="3" fill="#5b9bd5"/><circle cx="552.5" cy="395.8" r="3" fill="#5b9bd5"/><circle cx="552.5" cy="400.6" r="3" fill="#5b9bd5"/><circle cx="558.0" cy="395.8" r="3" fill="#5b9bd5"/><circle cx="562.9" cy="391.7" r="3" fill="#5b9bd5"/><circle cx="564.0" cy="389.9" r="3" fill="#5b9bd5"/><circle cx="572.9" cy="390.6" r="3" fill="#5b9bd5"/><circle cx="568.2" cy="399.6" r="3" fill="#5b9bd5"/><circle cx="571.1" cy="401.0" r="3" fill="#5b9bd5"/><circle cx="574.9" cy="397.0" r="3" fill="#5b9bd5"/><circle cx="578.3" cy="397.0" r="3" fill="#5b9bd5"/><circle cx="594.6" cy="393.2" r="3" fill="#5b9bd5"/><circle cx="597.2" cy="393.2" r="3" fill="#5b9bd5"/><circle cx="602.4" cy="402.1" r="3" fill="#5b9bd5"/><circle cx="532.7" cy="400.0" r="3" fill="#5b9bd5"/><circle cx="548.8" cy="410.0" r="3" fill="#5b9bd5"/><circle cx="552.5" cy="409.2" r="3" fill="#5b9bd5"/><circle cx="554.8" cy="407.0" r="3" fill="#5b9bd5"/><circle cx="554.0" cy="410.4" r="3" fill="#5b9bd5"/><circle cx="551.8" cy="414.9" r="3" fill="#5b9bd5"/><circle cx="567.0" cy="406.0" r="3" fill="#5b9bd5"/><circle cx="567.0" cy="410.7" r="3" fill="#5b9bd5"/><circle cx="595.7" cy="415.9" r="3" fill="#5b9bd5"/><circle cx="539.9" cy="419.6" r="3" fill="#5b9bd5"/><circle cx="561.9" cy="418.9" r="3" fill="#5b9bd5"/><circle cx="575.6" cy="421.9" r="3" fill="#5b9bd5"/><circle cx="578.9" cy="420.8" r="3" fill="#5b9bd5"/><circle cx="576.8" cy="427.8" r="3" fill="#5b9bd5"/><circle cx="555.1" cy="426.8" r="3" fill="#5b9bd5"/><circle cx="551.8" cy="433.8" r="3" fill="#5b9bd5"/><circle cx="558.0" cy="436.8" r="3" fill="#5b9bd5"/><circle cx="597.6" cy="433.8" r="3" fill="#5b9bd5"/><circle cx="602.1" cy="434.8" r="3" fill="#5b9bd5"/><circle cx="600.2" cy="450.9" r="3" fill="#5b9bd5"/><circle cx="617.6" cy="382.4" r="3" fill="#5b9bd5"/><circle cx="620.3" cy="384.7" r="3" fill="#5b9bd5"/><circle cx="620.0" cy="386.9" r="3" fill="#5b9bd5"/><circle cx="625.5" cy="383.9" r="3" fill="#5b9bd5"/><circle cx="628.5" cy="383.2" r="3" fill="#5b9bd5"/><circle cx="637.9" cy="385.1" r="3" fill="#5b9bd5"/><circle cx="656.8" cy="385.7" r="3" fill="#5b9bd5"/><circle cx="613.6" cy="389.1" r="3" fill="#5b9bd5"/><circle cx="627.0" cy="390.6" r="3" fill="#5b9bd5"/><circle cx="608.7" cy="394.0" r="3" fill="#5b9bd5"/><circle cx="651.6" cy="393.6" r="3" fill="#5b9bd5"/><circle cx="653.1" cy="395.1" r="3" fill="#5b9bd5"/><circle cx="608.7" cy="401.0" r="3" fill="#5b9bd5"/><circle cx="618.8" cy="402.5" r="3" fill="#5b9bd5"/><circle cx="621.8" cy="404.8" r="3" fill="#5b9bd5"/><circle cx="623.0" cy="408.5" r="3" fill="#5b9bd5"/><circle cx="627.0" cy="407.7" r="3" fill="#5b9bd5"/><circle cx="666.8" cy="401.8" r="3" fill="#5b9bd5"/><circle cx="665.7" cy="411.9" r="3" fill="#5b9bd5"/><circle cx="641.9" cy="412.9" r="3" fill="#5b9bd5"/><circle cx="606.9" cy="420.8" r="3" fill="#5b9bd5"/><circle cx="612.9" cy="418.9" r="3" fill="#5b9bd5"/><circle cx="633.7" cy="420.8" r="3" fill="#5b9bd5"/><circle cx="646.8" cy="422.9" r="3" fill="#5b9bd5"/><circle cx="635.9" cy="428.9" r="3" fill="#5b9bd5"/><circle cx="643.8" cy="429.8" r="3" fill="#5b9bd5"/><circle cx="653.1" cy="431.8" r="3" fill="#5b9bd5"/><circle cx="654.6" cy="429.3" r="3" fill="#5b9bd5"/><circle cx="656.0" cy="430.1" r="3" fill="#5b9bd5"/><circle cx="662.7" cy="425.9" r="3" fill="#5b9bd5"/><circle cx="667.9" cy="425.9" r="3" fill="#5b9bd5"/><circle cx="613.6" cy="436.8" r="3" fill="#5b9bd5"/><circle cx="613.6" cy="440.5" r="3" fill="#5b9bd5"/><circle cx="618.8" cy="435.7" r="3" fill="#5b9bd5"/><circle cx="627.8" cy="442.0" r="3" fill="#5b9bd5"/><circle cx="627.0" cy="444.6" r="3" fill="#5b9bd5"/><circle cx="638.9" cy="442.7" r="3" fill="#5b9bd5"/><circle cx="645.9" cy="437.5" r="3" fill="#5b9bd5"/><circle cx="647.1" cy="440.2" r="3" fill="#5b9bd5"/><circle cx="656.0" cy="437.8" r="3" fill="#5b9bd5"/><circle cx="612.9" cy="450.9" r="3" fill="#5b9bd5"/><circle cx="682.9" cy="382.7" r="3" fill="#5b9bd5"/><circle cx="686.6" cy="385.7" r="3" fill="#5b9bd5"/><circle cx="697.0" cy="386.9" r="3" fill="#5b9bd5"/><circle cx="677.0" cy="391.7" r="3" fill="#5b9bd5"/><circle cx="704.9" cy="393.6" r="3" fill="#5b9bd5"/><circle cx="714.9" cy="390.6" r="3" fill="#5b9bd5"/><circle cx="682.9" cy="400.6" r="3" fill="#5b9bd5"/><circle cx="682.9" cy="406.0" r="3" fill="#5b9bd5"/><circle cx="690.8" cy="402.5" r="3" fill="#5b9bd5"/><circle cx="706.0" cy="403.6" r="3" fill="#5b9bd5"/><circle cx="707.0" cy="402.5" r="3" fill="#5b9bd5"/><circle cx="685.9" cy="410.7" r="3" fill="#5b9bd5"/><circle cx="681.1" cy="415.9" r="3" fill="#5b9bd5"/><text x="382.5" y="323" font-size="9.6" fill="#595959" text-anchor="middle" font-family="Liberation Sans">-1.5</text><text x="592.5" y="526.6" font-size="9.6" fill="#595959" text-anchor="end" font-family="Liberation Sans">-1.5</text><text x="456.5" y="323" font-size="9.6" fill="#595959" text-anchor="middle" font-family="Liberation Sans">-1</text><text x="592.5" y="454.6" font-size="9.6" fill="#595959" text-anchor="end" font-family="Liberation Sans">-1</text><text x="529.5" y="323" font-size="9.6" fill="#595959" text-anchor="middle" font-family="Liberation Sans">-0.5</text><text x="592.5" y="381.6" font-size="9.6" fill="#595959" text-anchor="end" font-family="Liberation Sans">-0.5</text><text x="602.5" y="323" font-size="9.6" fill="#595959" text-anchor="middle" font-family="Liberation Sans">0</text><text x="592.5" y="308.6" font-size="9.6" fill="#595959" text-anchor="end" font-family="Liberation Sans">0</text><text x="675.5" y="323" font-size="9.6" fill="#595959" text-anchor="middle" font-family="Liberation Sans">0.5</text><text x="592.5" y="235.6" font-size="9.6" fill="#595959" text-anchor="end" font-family="Liberation Sans">0.5</text><text x="748.5" y="323" font-size="9.6" fill="#595959" text-anchor="middle" font-family="Liberation Sans">1</text><text x="592.5" y="162.6" font-size="9.6" fill="#595959" text-anchor="end" font-family="Liberation Sans">1</text><text x="822.5" y="323" font-size="9.6" fill="#595959" text-anchor="middle" font-family="Liberation Sans">1.5</text><text x="592.5" y="90.6" font-size="9.6" fill="#595959" text-anchor="end" font-family="Liberation Sans">1.5</text><text transform="translate(601,69) scale(0.8,1)" x="0" y="0" font-size="15.8" fill="#595959" text-anchor="middle" font-family="Liberation Sans">Y</text></svg>
</body></html>
